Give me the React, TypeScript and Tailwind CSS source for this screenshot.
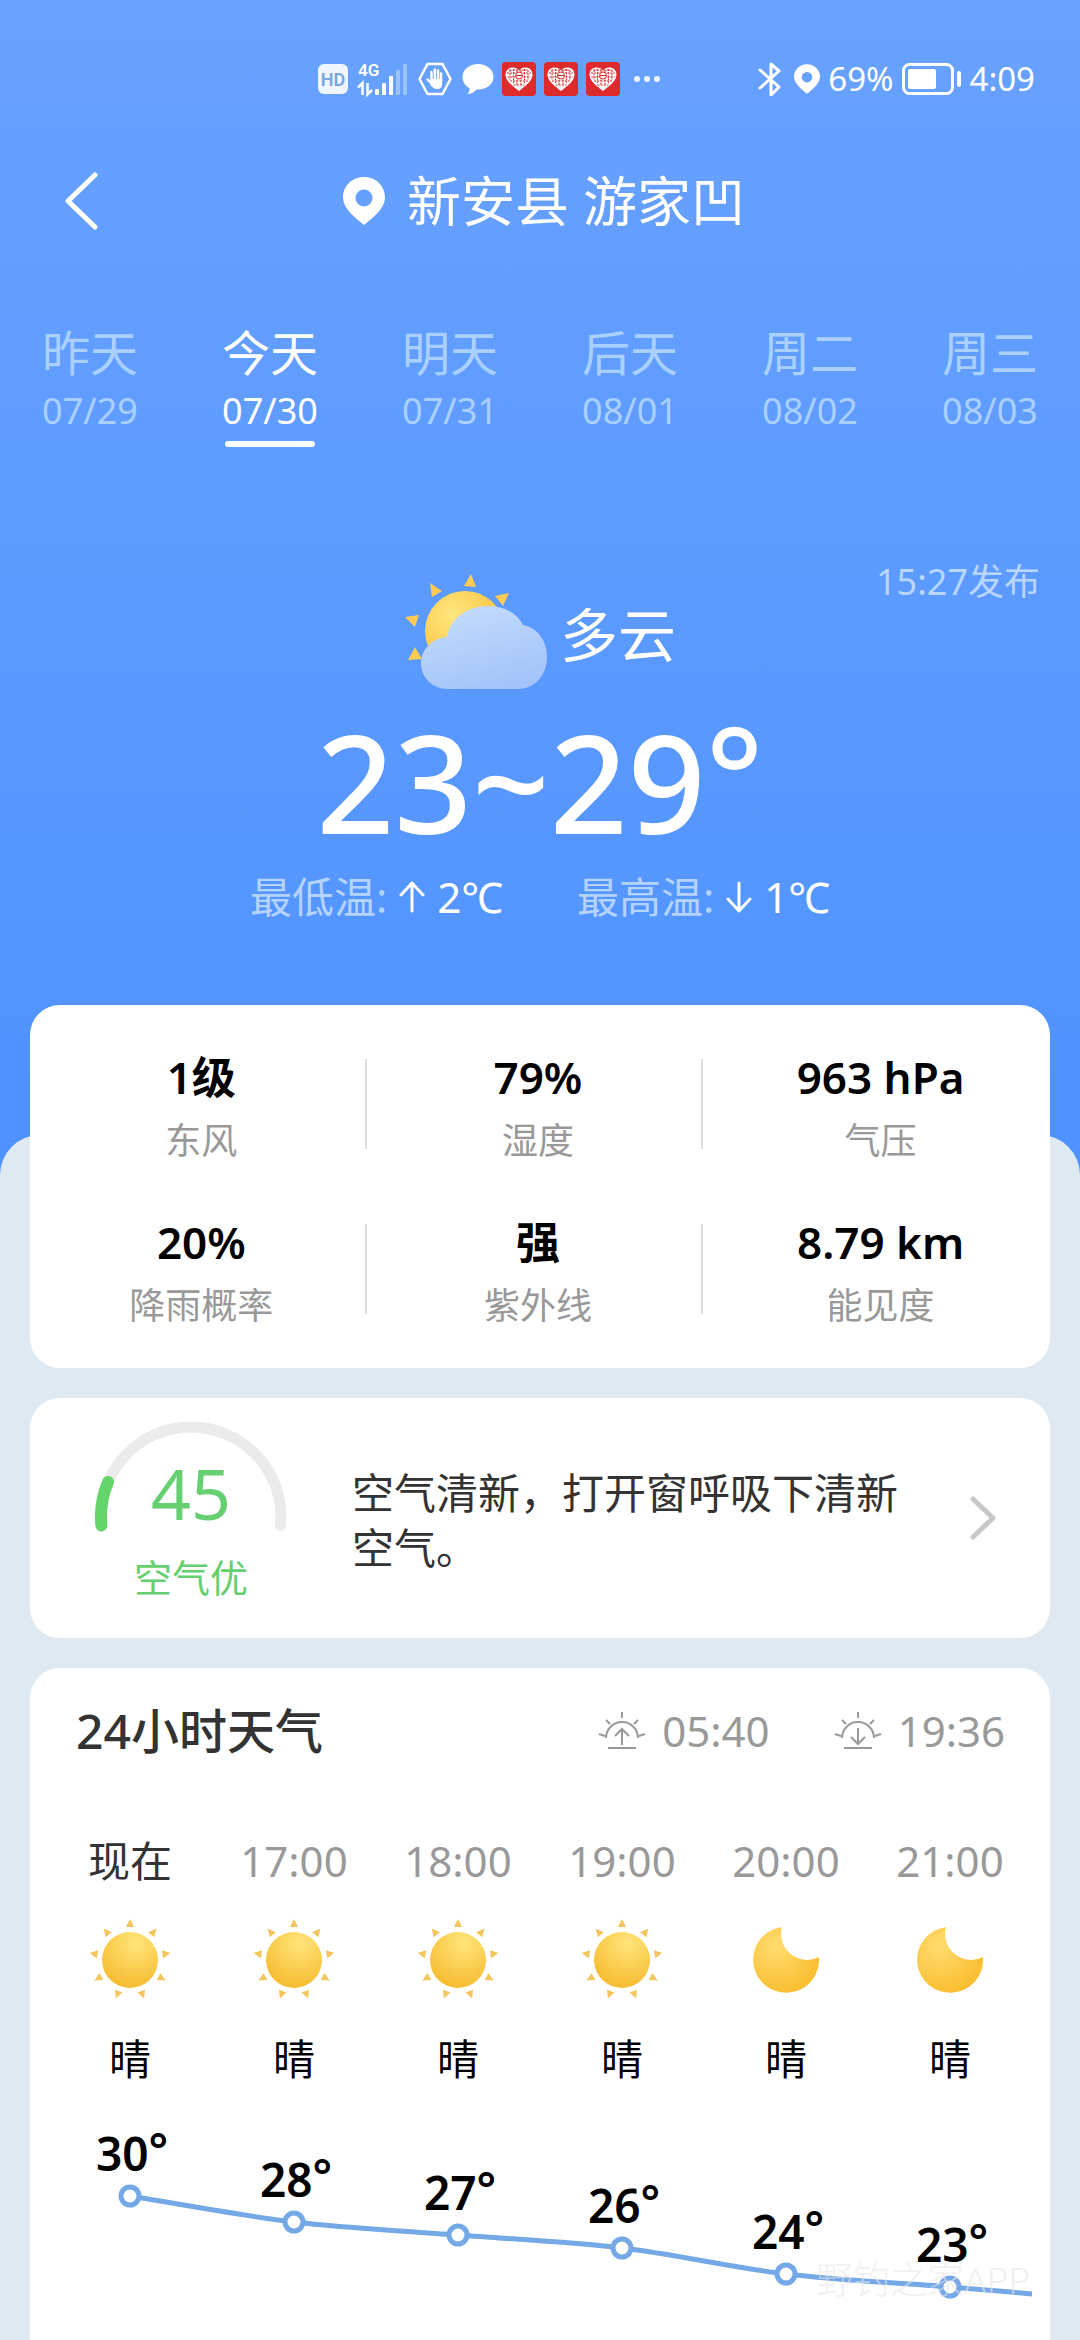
import { useId, useState } from "react";
import clsx from "clsx";

const days = [
  { name: "昨天", date: "07/29" },
  { name: "今天", date: "07/30" },
  { name: "明天", date: "07/31" },
  { name: "后天", date: "08/01" },
  { name: "周二", date: "08/02" },
  { name: "周三", date: "08/03" },
];

const metrics = [
  { value: "1级", label: "东风" },
  { value: "79%", label: "湿度" },
  { value: "963 hPa", label: "气压" },
  { value: "20%", label: "降雨概率" },
  { value: "强", label: "紫外线" },
  { value: "8.79 km", label: "能见度" },
];

const hours = [
  { time: "现在", icon: "sun", text: "晴", temp: 30 },
  { time: "17:00", icon: "sun", text: "晴", temp: 28 },
  { time: "18:00", icon: "sun", text: "晴", temp: 27 },
  { time: "19:00", icon: "sun", text: "晴", temp: 26 },
  { time: "20:00", icon: "moon", text: "晴", temp: 24 },
  { time: "21:00", icon: "moon", text: "晴", temp: 23 },
];

function PinIcon({ className }: { className?: string }) {
  return (
    <svg viewBox="0 0 42 48" className={className} fill="currentColor">
      <path
        fillRule="evenodd"
        d="M21 0C9 0 0 9 0 20.500c0 11 11.500 19.500 21 27.500 9.500-8 21-16.500 21-27.500C42 9 33 0 21 0Zm0 12.500a8.500 8.500 0 1 1 0 17 8.500 8.500 0 0 1 0-17Z"
      />
    </svg>
  );
}

function SignalIcon() {
  return (
    <svg viewBox="0 0 50 34" className="h-[34px] w-[50px] overflow-visible" fill="#fff">
      <text
        x="0"
        y="14"
        fontSize="17"
        fontWeight="600"
        fontFamily="Roboto, sans-serif"
      >
        4G
      </text>
      <path d="M0 25.500L4.500 21v12M9.500 21v11.500L14 28" stroke="#fff" strokeWidth="2.500" fill="none" />
      <rect x="17" y="27" width="4" height="6" rx="1" />
      <rect x="24" y="21" width="4" height="12" rx="1" />
      <rect x="31" y="14" width="4" height="19" rx="1" />
      <rect x="38" y="8" width="4" height="25" rx="1" opacity="0.350" />
      <rect x="45" y="2" width="4" height="31" rx="1" opacity="0.350" />
    </svg>
  );
}

function HandIcon() {
  return (
    <svg viewBox="0 0 34 34" className="h-[34px] w-[34px]" fill="none" stroke="#fff">
      <path d="M9.500 2h15L32.500 17l-8 15h-15L1.500 17Z" strokeWidth="2.500" strokeLinejoin="round" />
      <path d="M13.500 10v9M16.800 7.500v11M20 8.500v10M23 11.500V19M9.500 17.500l5 5" strokeWidth="2.400" strokeLinecap="round" />
      <path d="M12.500 17h11.700v5c0 3-2 5-5 5s-5-2-6.700-4Z" fill="#fff" stroke="none" />
    </svg>
  );
}

function BubbleIcon() {
  return (
    <svg viewBox="0 0 32 32" className="h-8 w-8" fill="#fff">
      <path d="M16 1C7.500 1 .500 6.500.500 14c0 5 3 9 7 11 .500 2-.500 4-2 6 4 0 7-2 9-4.500h1.500c8.500 0 15.500-5 15.500-12.500S24.500 1 16 1Z" />
    </svg>
  );
}

function HeartBadge() {
  return (
    <svg viewBox="0 0 34 34" className="h-[34px] w-[34px]">
      <rect width="34" height="34" rx="4" fill="#dd2a2a" />
      <path d="M17 29C11 24 3.500 19.500 3.500 12.500 3.500 8 7 5.500 10.500 5.500c3 0 5 1 6.500 3 1.500-2 3.500-3 6.500-3 3.500 0 7 2.500 7 7C30.500 19.500 23 24 17 29Z" fill="#fff" />
      <g fill="none" stroke="#dd2a2a" strokeWidth="1.100" strokeDasharray="2 1.200">
        <path d="M5 11h24M5.500 15h23M8 19h18M11.500 23h11M7.500 8h19" />
        <path d="M8 8v10M11.500 7v14M22.500 7v14M26 8v10M15 8v16M19 8v16" />
      </g>
      <circle cx="17" cy="13.500" r="3.500" fill="#fff" stroke="#dd2a2a" />
      <path d="M14 13.500h6" stroke="#dd2a2a" />
    </svg>
  );
}

function StatusBar() {
  return (
    <div className="flex h-[158px] items-center justify-between pl-[318px] pr-[45px] text-white">
      <div className="flex items-center gap-2">
        <div className="flex h-[30px] w-[30px] items-center justify-center rounded-md bg-white/90 font-[Roboto] text-[18px] font-semibold text-[#7aa5e0]">
          HD
        </div>
        <div className="flex items-center gap-2.5 pl-0.5">
          <SignalIcon />
          <HandIcon />
          <BubbleIcon />
        </div>
        <HeartBadge />
        <HeartBadge />
        <HeartBadge />
        <div className="flex gap-1 pl-1.5">
          <i className="h-[6px] w-[6px] rounded-full bg-white/90" />
          <i className="h-[6px] w-[6px] rounded-full bg-white/90" />
          <i className="h-[6px] w-[6px] rounded-full bg-white/90" />
        </div>
      </div>
      <div className="flex items-center gap-2 text-[33px] leading-10">
        <svg viewBox="0 0 24 34" className="h-[34px] w-6" fill="none" stroke="#fff" strokeWidth="3" strokeLinejoin="round" strokeLinecap="round">
          <path d="M2 8l19 17-8 8V2l8 7L2 26" />
        </svg>
        <PinIcon className="ml-1 h-8 w-[26px]" />
        <span>69%</span>
        <svg viewBox="0 0 60 32" className="h-8 w-[60px]" fill="none">
          <rect x="1.500" y="1.500" width="49" height="29" rx="6" stroke="#fff" strokeWidth="3" />
          <rect x="6" y="6" width="28" height="20" rx="2" fill="#fff" />
          <rect x="55" y="8" width="4" height="16" rx="2" fill="#fff" />
        </svg>
        <span>4:09</span>
      </div>
    </div>
  );
}

function CloudySunIcon() {
  const id = useId();
  return (
    <svg viewBox="404 574 144 116" className="h-[116px] w-36">
      <defs>
        <radialGradient id={id + "s"} cx="0.350" cy="0.300" r="0.700">
          <stop offset="0" stopColor="#ffe680" />
          <stop offset="1" stopColor="#fcc23c" />
        </radialGradient>
        <linearGradient id={id + "c"} x1="0.200" y1="0" x2="0.600" y2="1">
          <stop offset="0" stopColor="#c4dcfc" />
          <stop offset="1" stopColor="#a3c4fa" />
        </linearGradient>
      </defs>
      <g fill="#ffcb52">
        <path d="M471 574l5 13-12-1ZM430 583l12 8-10 6ZM509 593l-6 13-8-10ZM405 617l14-2-4 12ZM415 647l7 12-14 1Z" />
      </g>
      <circle cx="465" cy="631" r="40" fill={`url(#${id}s)`} />
      <path
        d="M448 689C433 689 421 678 421 663C421 650 432 638 447 637C450 618 468 606 488 606C504 606 517 613 523 625C538 628 547 641 547 657C547 675 535 689 518 689Z"
        fill={`url(#${id}c)`}
      />
    </svg>
  );
}

function SunIcon() {
  const id = useId();
  return (
    <svg viewBox="-42 -42 84 84" className="h-[84px] w-[84px]">
      <defs>
        <radialGradient id={id} cx="0.600" cy="0.200" r="0.850">
          <stop offset="0" stopColor="#ffe57c" />
          <stop offset="1" stopColor="#f6b92c" />
        </radialGradient>
      </defs>
      {[0, 40, 80, 120, 160, 200, 240, 280, 320].map((angle) => (
        <path key={angle} d="M0-41l4 8h-8Z" fill="#f3c55c" transform={`rotate(${angle})`} />
      ))}
      <circle r="28" fill={`url(#${id})`} />
    </svg>
  );
}

function MoonIcon() {
  const id = useId();
  return (
    <svg viewBox="-42 -42 84 84" className="h-[84px] w-[84px]">
      <defs>
        <radialGradient id={id} cx="0.350" cy="0.300" r="0.750">
          <stop offset="0" stopColor="#ffdc70" />
          <stop offset="1" stopColor="#fabd2e" />
        </radialGradient>
      </defs>
      <path d="M-4-33A33 33 0 1 0 33-3A26 26 0 0 1-4-33Z" fill={`url(#${id})`} />
    </svg>
  );
}

function HorizonIcon({ down }: { down?: boolean }) {
  return (
    <svg viewBox="0 0 48 40" className="h-10 w-12" fill="none" stroke="#999" strokeWidth="2">
      <path d="M8 27a16 16 0 1 1 32 0" />
      <path d="M24 1v6M8 9l4 4M40 9l-4 4M1 23l6 2M47 23l-6 2M10 37h28" />
      <path d={down ? "M24 17v16M17 26l7 7 7-7" : "M24 34V18M17 25l7-7 7 7"} />
    </svg>
  );
}

function Arrow({ down }: { down?: boolean }) {
  return (
    <svg viewBox="0 0 26 32" className="h-8 w-[26px]" fill="none" stroke="#fff" strokeWidth="3" strokeLinecap="round" strokeLinejoin="round">
      <path d={down ? "M13 2v28M2 18l11 12 11-12" : "M13 30V2M2 14L13 2l11 12"} />
    </svg>
  );
}

function AirGauge() {
  return (
    <svg viewBox="0 0 192 110" className="h-[110px] w-48 overflow-visible" fill="none" strokeLinecap="round">
      <path d="M6.400 104.500A90 90 0 1 1 185.600 104.500" stroke="#ebebeb" strokeWidth="11" />
      <path d="M6.400 104.500A90 90 0 0 1 13 61" stroke="#64d46c" strokeWidth="12" />
      <text x="96" y="99" textAnchor="middle" fontSize="70" fill="#66cf70">
        45
      </text>
    </svg>
  );
}

function TempChart() {
  const points = hours.map((h, i) => ({
    x: 82 + i * 164,
    y: 76 + (30 - h.temp) * 13,
    temp: h.temp,
  }));

  // the next hour is only visible up to the card edge
  const all = [...points, { x: 1066, y: 181, temp: 22 }];
  const line = all.reduce((d, p, i) => {
    if (i === 0) return `M${p.x} ${p.y}`;
    const prev = all[i - 1];
    const before = all[i - 2] ?? prev;
    const after = all[i + 1] ?? p;
    const c1 = `${prev.x + (p.x - before.x) / 6} ${prev.y + (p.y - before.y) / 6}`;
    const c2 = `${p.x - (after.x - prev.x) / 6} ${p.y - (after.y - prev.y) / 6}`;
    return `${d}C${c1} ${c2} ${p.x} ${p.y}`;
  }, "");

  return (
    <svg viewBox="0 0 984 220" className="mt-[33px] w-full">
      <path d={line} fill="none" stroke="#74a8e6" strokeWidth="5" />
      {points.map((p) => (
        <g key={p.x}>
          <circle cx={p.x} cy={p.y} r="9" fill="#fff" stroke="#74a8e6" strokeWidth="5" />
          <text x={p.x + 2} y={p.y - 25} textAnchor="middle" fontSize="46" fontWeight="600">
            {p.temp}
            <tspan dy="-4">°</tspan>
          </text>
        </g>
      ))}
    </svg>
  );
}

export default function App() {
  const [selected, setSelected] = useState(1);

  return (
    <div className="flex min-h-screen flex-col bg-linear-to-b from-[#69a2ff] from-0% to-[#4e92ff] to-50% font-['Noto_Sans','Noto_Sans_CJK_SC',sans-serif]">
      <StatusBar />

      <header className="flex h-[86px] items-center text-white">
        <button type="button" aria-label="返回" className="flex w-[164px] pl-[64px]">
          <svg viewBox="0 0 34 58" className="h-[58px] w-[34px]" fill="none" stroke="#fff" strokeWidth="5" strokeLinecap="round" strokeLinejoin="round">
            <path d="M31 3L4 29l27 26" />
          </svg>
        </button>
        <h1 className="flex flex-1 items-center justify-center gap-[22px] text-[54px] leading-[72px]">
          <PinIcon className="h-12 w-[42px]" />
          新安县 游家凹
        </h1>
        <div className="w-[156px]" />
      </header>

      <nav className="grid grid-cols-6 pt-[77px]">
        {days.map((day, i) => (
          <button
            key={day.date}
            type="button"
            onClick={() => setSelected(i)}
            className={clsx(
              "flex flex-col items-center",
              i === selected ? "text-white" : "text-[#a9d0ff]"
            )}
          >
            <span className="text-5xl leading-[64px]">{day.name}</span>
            <span className="text-[36px] leading-[52px]">{day.date}</span>
            <span
              className={clsx(
                "mt-1 h-1.5 w-[90px] rounded-full",
                i === selected && "bg-white"
              )}
            />
          </button>
        ))}
      </nav>

      <section className="flex flex-col text-white">
        <div className="mt-[113px] grid grid-cols-[1fr_auto_1fr] items-start">
          <div />
          <div className="flex items-center gap-3 pt-[14px]">
            <CloudySunIcon />
            <span className="pt-1.5 text-[58px] leading-[72px]">多云</span>
          </div>
          <span className="pr-10 text-right text-[36px] leading-[44px] text-[#b9d6ff]">
            15:27发布
          </span>
        </div>
        <p className="mt-3 flex justify-center text-[136px] font-medium leading-[160px]">
          23~29
          <span className="leading-[144px]">°</span>
        </p>
        <div className="mt-[7px] flex justify-center gap-[74px] text-[42px] leading-[56px]">
          <div className="flex items-center gap-3">
            <span className="text-[#b4d3ff]">最低温:</span>
            <Arrow />
            <span>2℃</span>
          </div>
          <div className="flex items-center gap-3">
            <span className="text-[#b4d3ff]">最高温:</span>
            <Arrow down />
            <span>1℃</span>
          </div>
        </div>
      </section>

      <main className="mt-[210px] flex flex-1 flex-col gap-[30px] rounded-t-[40px] bg-[#dfe9f1] px-[30px]">
        <section className="-mt-[130px] grid grid-cols-[33fr_33fr_34fr] gap-y-[49px] rounded-[30px] bg-white pb-[38px] pt-[44px]">
          {metrics.map((m, i) => (
            <div key={m.label} className="flex items-start pl-2">
              <div className="flex flex-1 flex-col items-center gap-3">
                <span className="text-[44px] font-semibold leading-[56px] text-black">
                  {m.value}
                </span>
                <span className="text-[36px] leading-[48px] text-[#999]">
                  {m.label}
                </span>
              </div>
              {i % 3 < 2 && <div className="mt-2.5 h-[90px] w-0.5 bg-[#ddd]" />}
            </div>
          ))}
        </section>

        <a
          href="#air"
          className="flex h-60 items-center rounded-[30px] bg-white pl-[65px] pr-[54px]"
        >
          <div className="flex flex-col items-center gap-[22px] self-start pt-[23px]">
            <AirGauge />
            <span className="text-[38px] leading-[48px] text-[#66cf70]">空气优</span>
          </div>
          <p className="ml-[65px] mr-[70px] flex-1 pt-1 text-[42px] leading-[55px] text-[#333]">
            空气清新，打开窗呼吸下清新空气。
          </p>
          <svg viewBox="0 0 26 44" className="h-11 w-[26px]" fill="none" stroke="#c8c8c8" strokeWidth="5" strokeLinecap="round" strokeLinejoin="round">
            <path d="M3 3l20 19L3 41" />
          </svg>
        </a>

        <section className="relative flex-1 rounded-t-[30px] bg-white px-[18px] pt-[31px]">
          <div className="flex items-center pl-7 pr-[27px]">
            <h2 className="flex-1 text-5xl font-medium leading-[64px] text-[#333]">
              24小时天气
            </h2>
            <div className="flex items-center gap-16 text-[42px] leading-[56px] text-[#999]">
              <span className="flex items-center gap-4">
                <HorizonIcon />
                05:40
              </span>
              <span className="flex items-center gap-4">
                <HorizonIcon down />
                19:36
              </span>
            </div>
          </div>

          <div className="mt-[70px] grid grid-cols-6">
            {hours.map((h, i) => (
              <div
                key={h.time}
                className="flex flex-col items-center gap-[29px] text-[42px] leading-[56px]"
              >
                <span className={i === 0 ? "text-[#333]" : "text-[#999]"}>
                  {h.time}
                </span>
                {h.icon === "sun" ? <SunIcon /> : <MoonIcon />}
                <span className="text-black">{h.text}</span>
              </div>
            ))}
          </div>

          <TempChart />

          {/* watermark */}
          <span className="absolute bottom-9 right-5 text-[37px] font-light leading-[48px] text-[#e6e6e6]/60">
            野钓之家APP
          </span>
        </section>
      </main>
    </div>
  );
}
